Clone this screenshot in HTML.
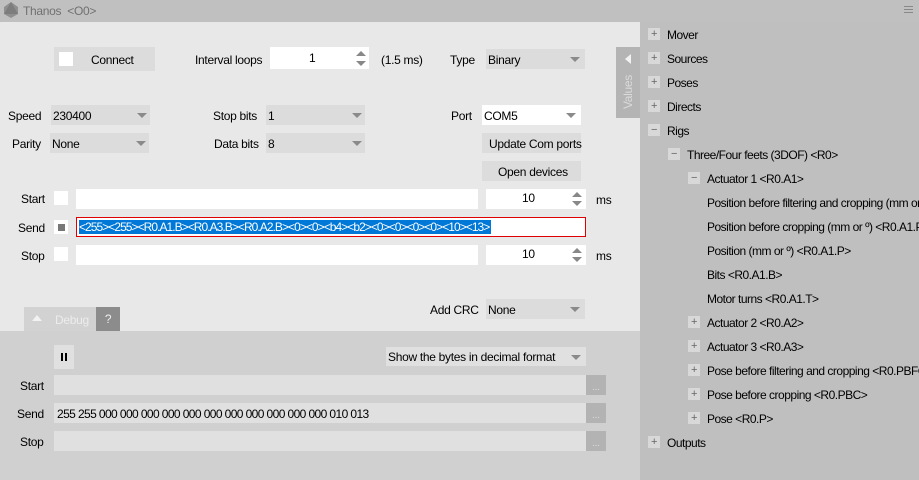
<!DOCTYPE html>
<html><head><meta charset="utf-8"><style>
*{margin:0;padding:0;box-sizing:border-box}
body{width:919px;height:480px;overflow:hidden;background:#bfbfbf;font-family:"Liberation Sans",sans-serif;font-size:12px;color:#000;position:relative;letter-spacing:-0.3px}
.a{position:absolute}
.t{position:absolute;line-height:14px;white-space:nowrap}
.w{background:#fff}
.g{background:#dcdcdc}
.arr{position:absolute;width:0;height:0;border-left:5px solid transparent;border-right:5px solid transparent;border-top:5px solid #8a8a8a}
.pb{position:absolute;width:12px;height:12px;background:#d8d8d8;color:#666;font-size:11px;line-height:12px;text-align:center}
.sp{position:absolute;width:0;height:0;border-left:5px solid transparent;border-right:5px solid transparent}
.su{border-bottom:5px solid #888}.sd{border-top:5px solid #888}
.dots{position:absolute;width:20px;height:20px;background:#b3b3b3;color:#ddd;font-size:10px;text-align:center;line-height:26px}
.tr .t{letter-spacing:-0.5px}
</style></head><body>
<div class="a" style="left:0;top:0;width:919px;height:22px;background:#c0c0c0"></div>
<svg class="a" style="left:3px;top:2px" width="16" height="17"><polygon points="8,0 15,5 15,12 8,16 1,12 1,5" fill="#8f8f8f"/><polygon points="8,0 15,12 1,12" fill="#7d7d7d"/></svg>
<div class="t" style="left:23px;top:4px;color:#707070;font-size:12px">Thanos&nbsp; &lt;O0&gt;</div>
<div class="a" style="left:904px;top:6px;width:9px;height:1px;background:#888;box-shadow:0 3px 0 #888,0 6px 0 #888"></div>
<div class="a" style="left:0;top:22px;width:640px;height:309px;background:#e8e8e8"></div>
<div class="a" style="left:0;top:331px;width:640px;height:149px;background:#d0d0d0"></div>
<div class="a g" style="left:54px;top:47px;width:101px;height:24px"></div>
<div class="a w" style="left:59px;top:52px;width:14px;height:14px"></div>
<div class="t" style="left:91px;top:53px">Connect</div>
<div class="t" style="left:195px;top:53px">Interval loops</div>
<div class="a w" style="left:270px;top:47px;width:99px;height:22px"></div>
<div class="t" style="left:309px;top:51px">1</div>
<div class="sp su" style="left:356px;top:51px"></div><div class="sp sd" style="left:356px;top:61px"></div>
<div class="t" style="left:381px;top:53px">(1.5 ms)</div>
<div class="t" style="left:450px;top:53px">Type</div>
<div class="a g" style="left:486px;top:49px;width:99px;height:20px"></div>
<div class="t" style="left:488px;top:53px">Binary</div>
<div class="arr" style="left:570px;top:57px"></div>
<div class="t" style="left:8px;top:109px">Speed</div>
<div class="a g" style="left:51px;top:105px;width:99px;height:20px"></div>
<div class="t" style="left:53px;top:109px">230400</div>
<div class="arr" style="left:137px;top:113px"></div>
<div class="t" style="left:213px;top:109px">Stop bits</div>
<div class="a g" style="left:266px;top:105px;width:99px;height:20px"></div>
<div class="t" style="left:268px;top:109px">1</div>
<div class="arr" style="left:352px;top:113px"></div>
<div class="t" style="left:451px;top:109px">Port</div>
<div class="a w" style="left:482px;top:105px;width:99px;height:20px"></div>
<div class="t" style="left:484px;top:109px">COM5</div>
<div class="arr" style="left:566px;top:113px"></div>
<div class="t" style="left:12px;top:137px">Parity</div>
<div class="a g" style="left:50px;top:133px;width:99px;height:20px"></div>
<div class="t" style="left:52px;top:137px">None</div>
<div class="arr" style="left:136px;top:141px"></div>
<div class="t" style="left:214px;top:137px">Data bits</div>
<div class="a g" style="left:266px;top:133px;width:99px;height:20px"></div>
<div class="t" style="left:268px;top:137px">8</div>
<div class="arr" style="left:352px;top:141px"></div>
<div class="a g" style="left:482px;top:133px;width:99px;height:20px"></div>
<div class="t" style="left:489px;top:137px">Update Com ports</div>
<div class="a g" style="left:482px;top:161px;width:99px;height:20px"></div>
<div class="t" style="left:498px;top:165px">Open devices</div>
<div class="t" style="left:21px;top:192px">Start</div>
<div class="a w" style="left:54px;top:191px;width:14px;height:14px"></div>
<div class="a w" style="left:76px;top:189px;width:402px;height:20px"></div>
<div class="a w" style="left:486px;top:189px;width:100px;height:20px"></div>
<div class="t" style="left:522px;top:191px">10</div>
<div class="sp su" style="left:572px;top:192px"></div><div class="sp sd" style="left:572px;top:201px"></div>
<div class="t" style="left:596px;top:193px">ms</div>
<div class="t" style="left:18px;top:221px">Send</div>
<div class="a w" style="left:54px;top:220px;width:14px;height:14px"></div>
<div class="a" style="left:58px;top:224px;width:7px;height:7px;background:#777"></div>
<div class="a w" style="left:76px;top:217px;width:510px;height:20px;border:1px solid #e00000"></div>
<div class="t" style="left:79px;top:220px;background:#0078d7;color:#fff;letter-spacing:-0.95px;padding-right:2px">&lt;255&gt;&lt;255&gt;&lt;R0.A1.B&gt;&lt;R0.A3.B&gt;&lt;R0.A2.B&gt;&lt;0&gt;&lt;0&gt;&lt;b4&gt;&lt;b2&gt;&lt;0&gt;&lt;0&gt;&lt;0&gt;&lt;0&gt;&lt;10&gt;&lt;13&gt;</div>
<div class="t" style="left:21px;top:249px">Stop</div>
<div class="a w" style="left:54px;top:247px;width:14px;height:14px"></div>
<div class="a w" style="left:76px;top:245px;width:402px;height:20px"></div>
<div class="a w" style="left:486px;top:245px;width:100px;height:20px"></div>
<div class="t" style="left:522px;top:247px">10</div>
<div class="sp su" style="left:572px;top:248px"></div><div class="sp sd" style="left:572px;top:257px"></div>
<div class="t" style="left:596px;top:249px">ms</div>
<div class="t" style="left:430px;top:303px">Add CRC</div>
<div class="a g" style="left:486px;top:299px;width:99px;height:20px"></div>
<div class="t" style="left:488px;top:303px">None</div>
<div class="arr" style="left:570px;top:307px"></div>
<div class="a" style="left:24px;top:307px;width:72px;height:24px;background:#d2d2d2"></div>
<div class="sp" style="left:32px;top:315px;border-bottom:6px solid #f2f2f2"></div>
<div class="t" style="left:55px;top:313px;color:#ececec">Debug</div>
<div class="a" style="left:96px;top:307px;width:24px;height:24px;background:#8c8c8c;color:#eee;text-align:center;line-height:24px">?</div>
<div class="a" style="left:54px;top:345px;width:20px;height:24px;background:#e0e0e0"></div>
<div class="a" style="left:61px;top:353px;width:2px;height:8px;background:#000;box-shadow:4px 0 0 #000"></div>
<div class="a" style="left:386px;top:347px;width:200px;height:19px;background:#e0e0e0"></div>
<div class="t" style="left:388px;top:350px">Show the bytes in decimal format</div>
<div class="arr" style="left:571px;top:355px"></div>
<div class="t" style="left:20px;top:379px">Start</div>
<div class="a" style="left:54px;top:375px;width:532px;height:20px;background:#e0e0e0"></div>
<div class="dots" style="left:586px;top:375px">...</div>
<div class="t" style="left:17px;top:407px">Send</div>
<div class="a" style="left:54px;top:403px;width:532px;height:20px;background:#e0e0e0"></div>
<div class="t" style="left:57px;top:407px;letter-spacing:-0.6px">255 255 000 000 000 000 000 000 000 000 000 000 000 010 013</div>
<div class="dots" style="left:586px;top:403px">...</div>
<div class="t" style="left:20px;top:435px">Stop</div>
<div class="a" style="left:54px;top:431px;width:532px;height:20px;background:#e0e0e0"></div>
<div class="dots" style="left:586px;top:431px">...</div>
<div class="a" style="left:616px;top:47px;width:24px;height:71px;background:#b4b4b4"></div>
<div class="sp" style="left:625px;top:54px;border:none;border-top:5px solid transparent;border-bottom:5px solid transparent;border-right:6px solid #f2f2f2"></div>
<div class="t" style="left:604px;top:85px;transform:rotate(-90deg);color:#dadada;width:48px;text-align:center">Values</div>
<div class="tr">
<div class="pb" style="left:648px;top:28px">+</div><div class="t" style="left:667px;top:28px">Mover</div>
<div class="pb" style="left:648px;top:52px">+</div><div class="t" style="left:667px;top:52px">Sources</div>
<div class="pb" style="left:648px;top:76px">+</div><div class="t" style="left:667px;top:76px">Poses</div>
<div class="pb" style="left:648px;top:100px">+</div><div class="t" style="left:667px;top:100px">Directs</div>
<div class="pb" style="left:648px;top:124px">−</div><div class="t" style="left:667px;top:124px">Rigs</div>
<div class="pb" style="left:668px;top:148px">−</div><div class="t" style="left:687px;top:148px">Three/Four feets (3DOF) &lt;R0&gt;</div>
<div class="pb" style="left:688px;top:172px">−</div><div class="t" style="left:707px;top:172px">Actuator 1 &lt;R0.A1&gt;</div>
<div class="t" style="left:707px;top:196px">Position before filtering and cropping (mm or º</div>
<div class="t" style="left:707px;top:220px">Position before cropping (mm or º) &lt;R0.A1.PB</div>
<div class="t" style="left:707px;top:244px">Position (mm or º) &lt;R0.A1.P&gt;</div>
<div class="t" style="left:707px;top:268px">Bits &lt;R0.A1.B&gt;</div>
<div class="t" style="left:707px;top:292px">Motor turns &lt;R0.A1.T&gt;</div>
<div class="pb" style="left:688px;top:316px">+</div><div class="t" style="left:707px;top:316px">Actuator 2 &lt;R0.A2&gt;</div>
<div class="pb" style="left:688px;top:340px">+</div><div class="t" style="left:707px;top:340px">Actuator 3 &lt;R0.A3&gt;</div>
<div class="pb" style="left:688px;top:364px">+</div><div class="t" style="left:707px;top:364px">Pose before filtering and cropping &lt;R0.PBFC&gt;</div>
<div class="pb" style="left:688px;top:388px">+</div><div class="t" style="left:707px;top:388px">Pose before cropping &lt;R0.PBC&gt;</div>
<div class="pb" style="left:688px;top:412px">+</div><div class="t" style="left:707px;top:412px">Pose &lt;R0.P&gt;</div>
<div class="pb" style="left:648px;top:436px">+</div><div class="t" style="left:667px;top:436px">Outputs</div>
</div>
</body></html>
